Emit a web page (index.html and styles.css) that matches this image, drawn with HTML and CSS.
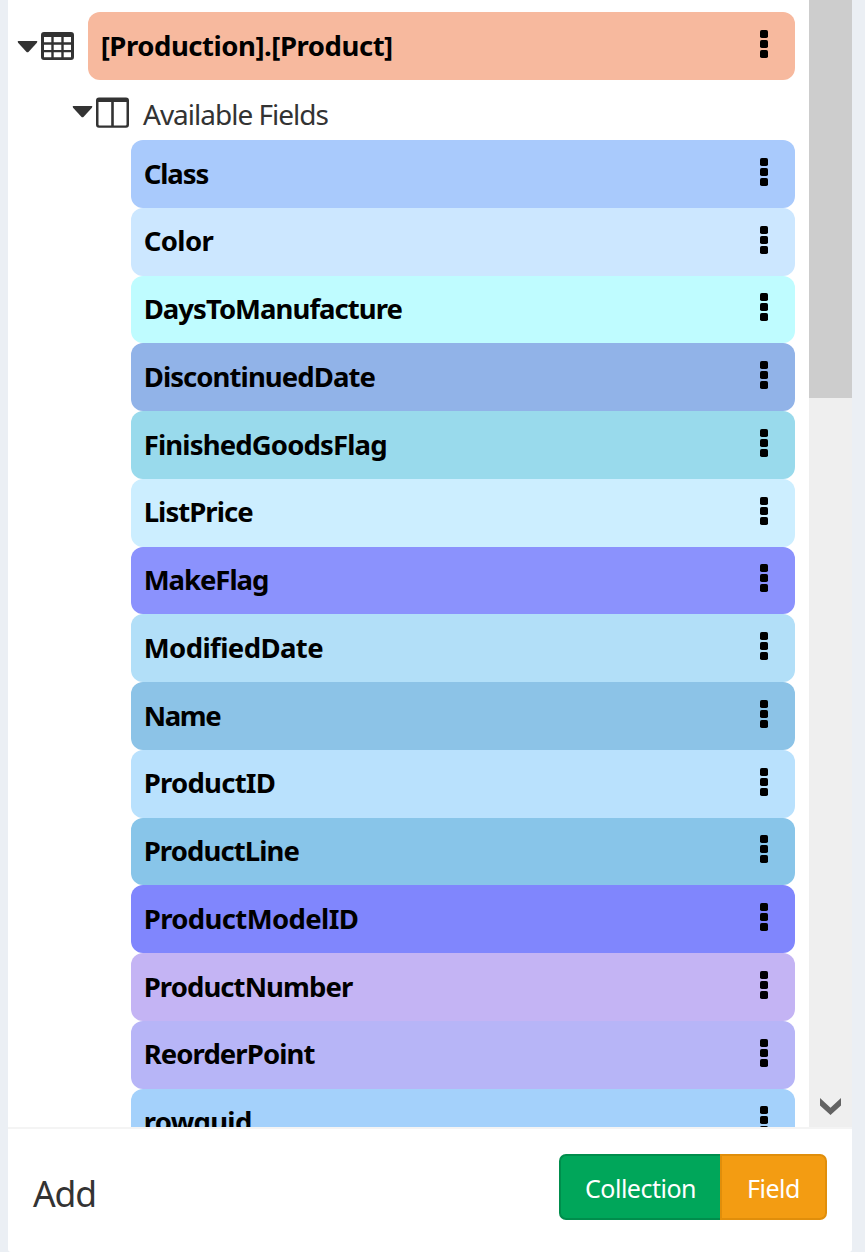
FILE: index.html
```html
<!DOCTYPE html>
<html lang="en">
<head>
<meta charset="utf-8">
<title>Product fields</title>
<link rel="stylesheet" href="styles.css">
</head>
<body>
<svg class="defs" width="0" height="0"><defs>
<symbol id="dots" viewBox="0 0 8 28"><rect width="8" height="8" rx="1.8"/><rect y="10" width="8" height="8" rx="1.8"/><rect y="20" width="8" height="8" rx="1.8"/></symbol>
<symbol id="caret" viewBox="0 0 20 12"><path d="M.8 0h18.4q1.3.3.2 1.7l-8.2 9q-1.2 1.2-2.4 0L.6 1.7Q-.5.3.8 0z"/></symbol>
</defs></svg>
<div class="panel">
  <div class="viewport">
    <div class="tree">
      <div class="node root">
        <svg class="caret"><use href="#caret"/></svg>
        <svg class="table-icon" viewBox="0 0 33 28"><path fill-rule="evenodd" d="M3 0h27q3 0 3 3v22q0 3-3 3H3q-3 0-3-3V3Q0 0 3 0zM3 5v5.3h7.3V5zm9.700 0v5.300h7.600V5zm10 0v5.300H30V5zM3 12.700v5.300h7.300v-5.300zm9.700 0v5.300h7.600v-5.300zm10 0v5.300H30v-5.300zM3 20.300v5h7.300v-5zm9.700 0v5h7.600v-5zm10 0v5H30v-5z"/></svg>
        <div class="chip collection"><span class="t0">[Production].[Product]</span><svg class="dots"><use href="#dots"/></svg></div>
      </div>
      <div class="node group">
        <svg class="caret"><use href="#caret"/></svg>
        <svg class="columns-icon" viewBox="0 0 33 31"><path fill-rule="evenodd" d="M3 .4h27q3 0 3 3v24.400q0 3-3 3H3q-3 0-3-3V3.400Q0 .4 3 .4zM2.500 5v22.500q0 1 1 1h11.700V5zm15.300 0v23.500h11.700q1 0 1-1V5z"/></svg>
        <span class="group-label">Available Fields</span>
      </div>
      <div class="fields">
        <div class="chip c1"><span class="t1">Class</span><svg class="dots"><use href="#dots"/></svg></div>
        <div class="chip c2"><span class="t2">Color</span><svg class="dots"><use href="#dots"/></svg></div>
        <div class="chip c3"><span class="t3">DaysToManufacture</span><svg class="dots"><use href="#dots"/></svg></div>
        <div class="chip c4"><span class="t4">DiscontinuedDate</span><svg class="dots"><use href="#dots"/></svg></div>
        <div class="chip c5"><span class="t5">FinishedGoodsFlag</span><svg class="dots"><use href="#dots"/></svg></div>
        <div class="chip c6"><span class="t6">ListPrice</span><svg class="dots"><use href="#dots"/></svg></div>
        <div class="chip c7"><span class="t7">MakeFlag</span><svg class="dots"><use href="#dots"/></svg></div>
        <div class="chip c8"><span class="t8">ModifiedDate</span><svg class="dots"><use href="#dots"/></svg></div>
        <div class="chip c9"><span class="t9">Name</span><svg class="dots"><use href="#dots"/></svg></div>
        <div class="chip c10"><span class="t10">ProductID</span><svg class="dots"><use href="#dots"/></svg></div>
        <div class="chip c11"><span class="t11">ProductLine</span><svg class="dots"><use href="#dots"/></svg></div>
        <div class="chip c12"><span class="t12">ProductModelID</span><svg class="dots"><use href="#dots"/></svg></div>
        <div class="chip c13"><span class="t13">ProductNumber</span><svg class="dots"><use href="#dots"/></svg></div>
        <div class="chip c14"><span class="t14">ReorderPoint</span><svg class="dots"><use href="#dots"/></svg></div>
        <div class="chip c15"><span class="t15">rowguid</span><svg class="dots"><use href="#dots"/></svg></div>
      </div>
    </div>
    <div class="scrollbar">
      <div class="thumb"></div>
      <svg class="arrow" viewBox="0 0 22 17" preserveAspectRatio="none"><path d="M0 0l11 9.700L22 0v7.500L11 17 0 7.500z"/></svg>
    </div>
  </div>
  <div class="footer">
    <span class="add">Add</span>
    <div class="buttons">
      <button class="btn green"><span>Collection</span></button><button class="btn orange"><span>Field</span></button>
    </div>
  </div>
</div>
</body>
</html>
```
FILE: styles.css
```css
* { box-sizing: border-box; }
body { margin: 0; height: 1252px; padding: 0 13px 0 8px; background: #ebeff4; font-family: "Noto Sans", "Open Sans", sans-serif; color: #333; overflow: hidden; }
.defs { position: absolute; }
.panel { height: 1252px; background: #fff; border-radius: 0 0 3px 3px; display: flex; flex-direction: column; }
.viewport { height: 1127px; display: flex; overflow: hidden; }
.tree { width: 787px; margin-right: 14px; padding-top: 12px; flex: none; }
.node { display: flex; }
.root { height: 68px; padding-left: 9px; }
.caret { width: 21px; height: 12px; fill: #333; flex: none; }
.root .caret { margin-top: 29px; }
.table-icon { width: 33px; height: 28px; margin: 20px 14px 0 3px; fill: #333; flex: none; }
.chip { height: 67.780px; display: flex; align-items: center; justify-content: space-between; border-radius: 12px; padding: 0 27px 0 12.700px; color: #000; font-size: 27.500px; font-weight: 700; line-height: 38px; white-space: nowrap; }
.chip span { margin-top: -1px; }
.chip .dots { width: 8px; height: 28px; margin-top: -4px; flex: none; }
.c11 .dots, .c15 .dots { margin-top: -5px; }
.collection { flex: 1; height: 68px; background: #f7b99e; }
.group { height: 60px; padding-left: 64px; }
.group .caret { margin-top: 26px; }
.columns-icon { width: 33px; height: 31px; margin: 17px 14px 0 3px; fill: #333; flex: none; }
.group-label { font-size: 28px; line-height: 38px; margin-top: 15px; letter-spacing: -1px; white-space: nowrap; }
.fields { padding-left: 123px; }
.c1 { background: #a9cafc; } .c2 { background: #cce7ff; } .c3 { background: #bffcff; }
.c4 { background: #91b3e8; } .c5 { background: #99daec; } .c6 { background: #cceeff; }
.c7 { background: #8b92fd; } .c8 { background: #b2dff8; } .c9 { background: #8cc3e7; }
.c10 { background: #b9e1fd; } .c11 { background: #88c5e9; } .c12 { background: #8086fd; }
.c13 { background: #c4b4f4; } .c14 { background: #b7b5f7; } .c15 { background: #a4d1fb; }
.chip .t0 { letter-spacing: -.46px; }
.chip .t1 { letter-spacing: -1.100px; margin-top: 1px; }
.chip .t2 { letter-spacing: -.6px; }
.chip .t3 { letter-spacing: -.97px; }
.chip .t4 { letter-spacing: -.92px; }
.chip .t5 { letter-spacing: -.85px; margin-top: 1px; }
.chip .t6 { letter-spacing: -.95px; }
.chip .t7 { letter-spacing: -1.050px; }
.chip .t8 { letter-spacing: -.58px; }
.chip .t9 { letter-spacing: -1.400px; }
.chip .t10 { letter-spacing: -.75px; }
.chip .t11 { letter-spacing: -.9px; }
.chip .t12 { letter-spacing: -.63px; }
.chip .t13 { letter-spacing: -.92px; }
.chip .t14 { letter-spacing: -.92px; }
.chip .t15 { letter-spacing: -.7px; }
.scrollbar { width: 43px; background: #efefef; display: flex; flex-direction: column; justify-content: space-between; align-items: center; padding-bottom: 12px; }
.thumb { width: 43px; height: 398px; background: #cdcdcd; }
.arrow { width: 21px; height: 17px; fill: #636363; }
.footer { height: 125px; border-top: 2px solid #f4f4f4; padding: 25px 25px 0; display: flex; justify-content: space-between; }
.add { font-size: 35.500px; line-height: 48px; margin-top: 15px; letter-spacing: -1.100px; }
.buttons { display: flex; width: 268px; height: 66px; }
.btn { font: 400 25px/34px "Noto Sans", "Open Sans", sans-serif; color: #fff; height: 66px; padding: 2px 0 0; letter-spacing: -.5px; }
.green { width: 161px; background: #00a65a; border: 2px solid #008d4c; border-right: 0; border-radius: 7px 0 0 7px; }
.orange { width: 107px; background: #f39c12; border: 2px solid #e08e0b; border-radius: 0 7px 7px 0; }
```
